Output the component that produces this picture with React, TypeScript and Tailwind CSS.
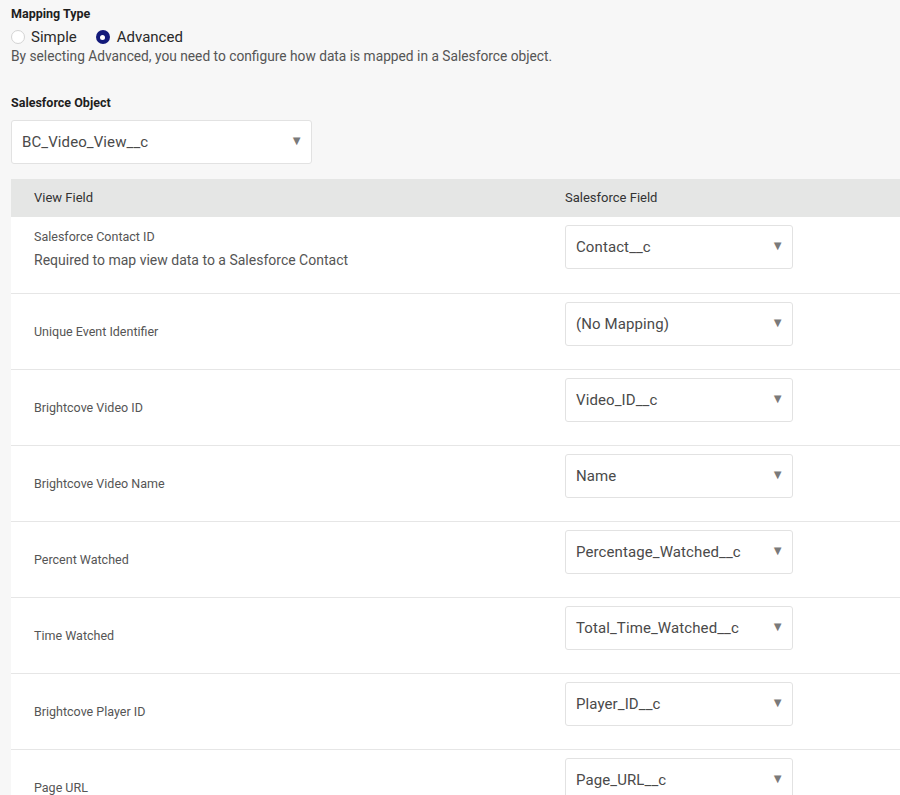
import React from 'react'

type Row = { label: string; value: string; note?: string }

const rows: Row[] = [
  { label: 'Salesforce Contact ID', value: 'Contact__c', note: 'Required to map view data to a Salesforce Contact' },
  { label: 'Unique Event Identifier', value: '(No Mapping)' },
  { label: 'Brightcove Video ID', value: 'Video_ID__c' },
  { label: 'Brightcove Video Name', value: 'Name' },
  { label: 'Percent Watched', value: 'Percentage_Watched__c' },
  { label: 'Time Watched', value: 'Total_Time_Watched__c' },
  { label: 'Brightcove Player ID', value: 'Player_ID__c' },
  { label: 'Page URL', value: 'Page_URL__c' },
]

function Select({ value, className }: { value: string; className: string }) {
  return (
    <div
      className={`flex h-[44px] items-center justify-between rounded-[3px] border border-[#e2e2e2] bg-white pl-[10px] pr-[8px] text-[15px] text-[#4a4a4a] ${className}`}
    >
      <span className="tracking-[0.1px]">{value}</span>
      <span className="mt-[-3px] text-[13px] text-[#7a7a7a]">▼</span>
    </div>
  )
}

export default function App() {
  return (
    <div className="h-[795px] overflow-hidden bg-[#f7f7f7] font-['Roboto',sans-serif] text-[#4a4a4a]">
      <div className="pl-[11px] pt-[6px]">
        <div className="text-[12.5px] font-bold leading-[16px] text-[#1e1e1e]">Mapping Type</div>
        <div className="mt-[5px] flex items-center text-[15px] leading-[20px] text-[#2a2a2a]">
          <span className="h-[14px] w-[14px] rounded-full border border-[#d4d4d4] bg-white" />
          <span className="ml-[6px]">Simple</span>
          <span className="ml-[19px] flex h-[14px] w-[14px] items-center justify-center rounded-full bg-[#131a7a]">
            <span className="h-[5px] w-[5px] rounded-full bg-white" />
          </span>
          <span className="ml-[7px]">Advanced</span>
        </div>
        <div className="mt-[-1px] text-[13.75px] leading-[20px] text-[#555]">
          By selecting Advanced, you need to configure how data is mapped in a Salesforce object.
        </div>

        <div className="mt-[29px] text-[12.5px] font-bold leading-[16px] text-[#1e1e1e]">Salesforce Object</div>
        <Select value="BC_Video_View__c" className="mt-[9px] w-[301px]" />

        <div className="mt-[15px] bg-white">
          <div className="grid h-[38px] grid-cols-[554px_1fr] items-center bg-[#e5e6e5] text-[13px] text-[#333]">
            <div className="pl-[23px]">View Field</div>
            <div>Salesforce Field</div>
          </div>
          {rows.map((r, i) => (
            <div
              key={r.label}
              className={`grid h-[76px] grid-cols-[554px_1fr] ${i > 0 ? 'border-t border-[#e6e6e6]' : ''}`}
            >
              <div className={`pl-[23px] ${r.note ? 'pt-[12px]' : 'pt-[30px]'}`}>
                <div className="text-[12.5px] leading-[16px] text-[#555]">{r.label}</div>
                {r.note && <div className="mt-[5px] text-[14px] leading-[20px] text-[#555]">{r.note}</div>}
              </div>
              <div className="pt-[8px]">
                <Select value={r.value} className="w-[228px]" />
              </div>
            </div>
          ))}
        </div>
      </div>
    </div>
  )
}
